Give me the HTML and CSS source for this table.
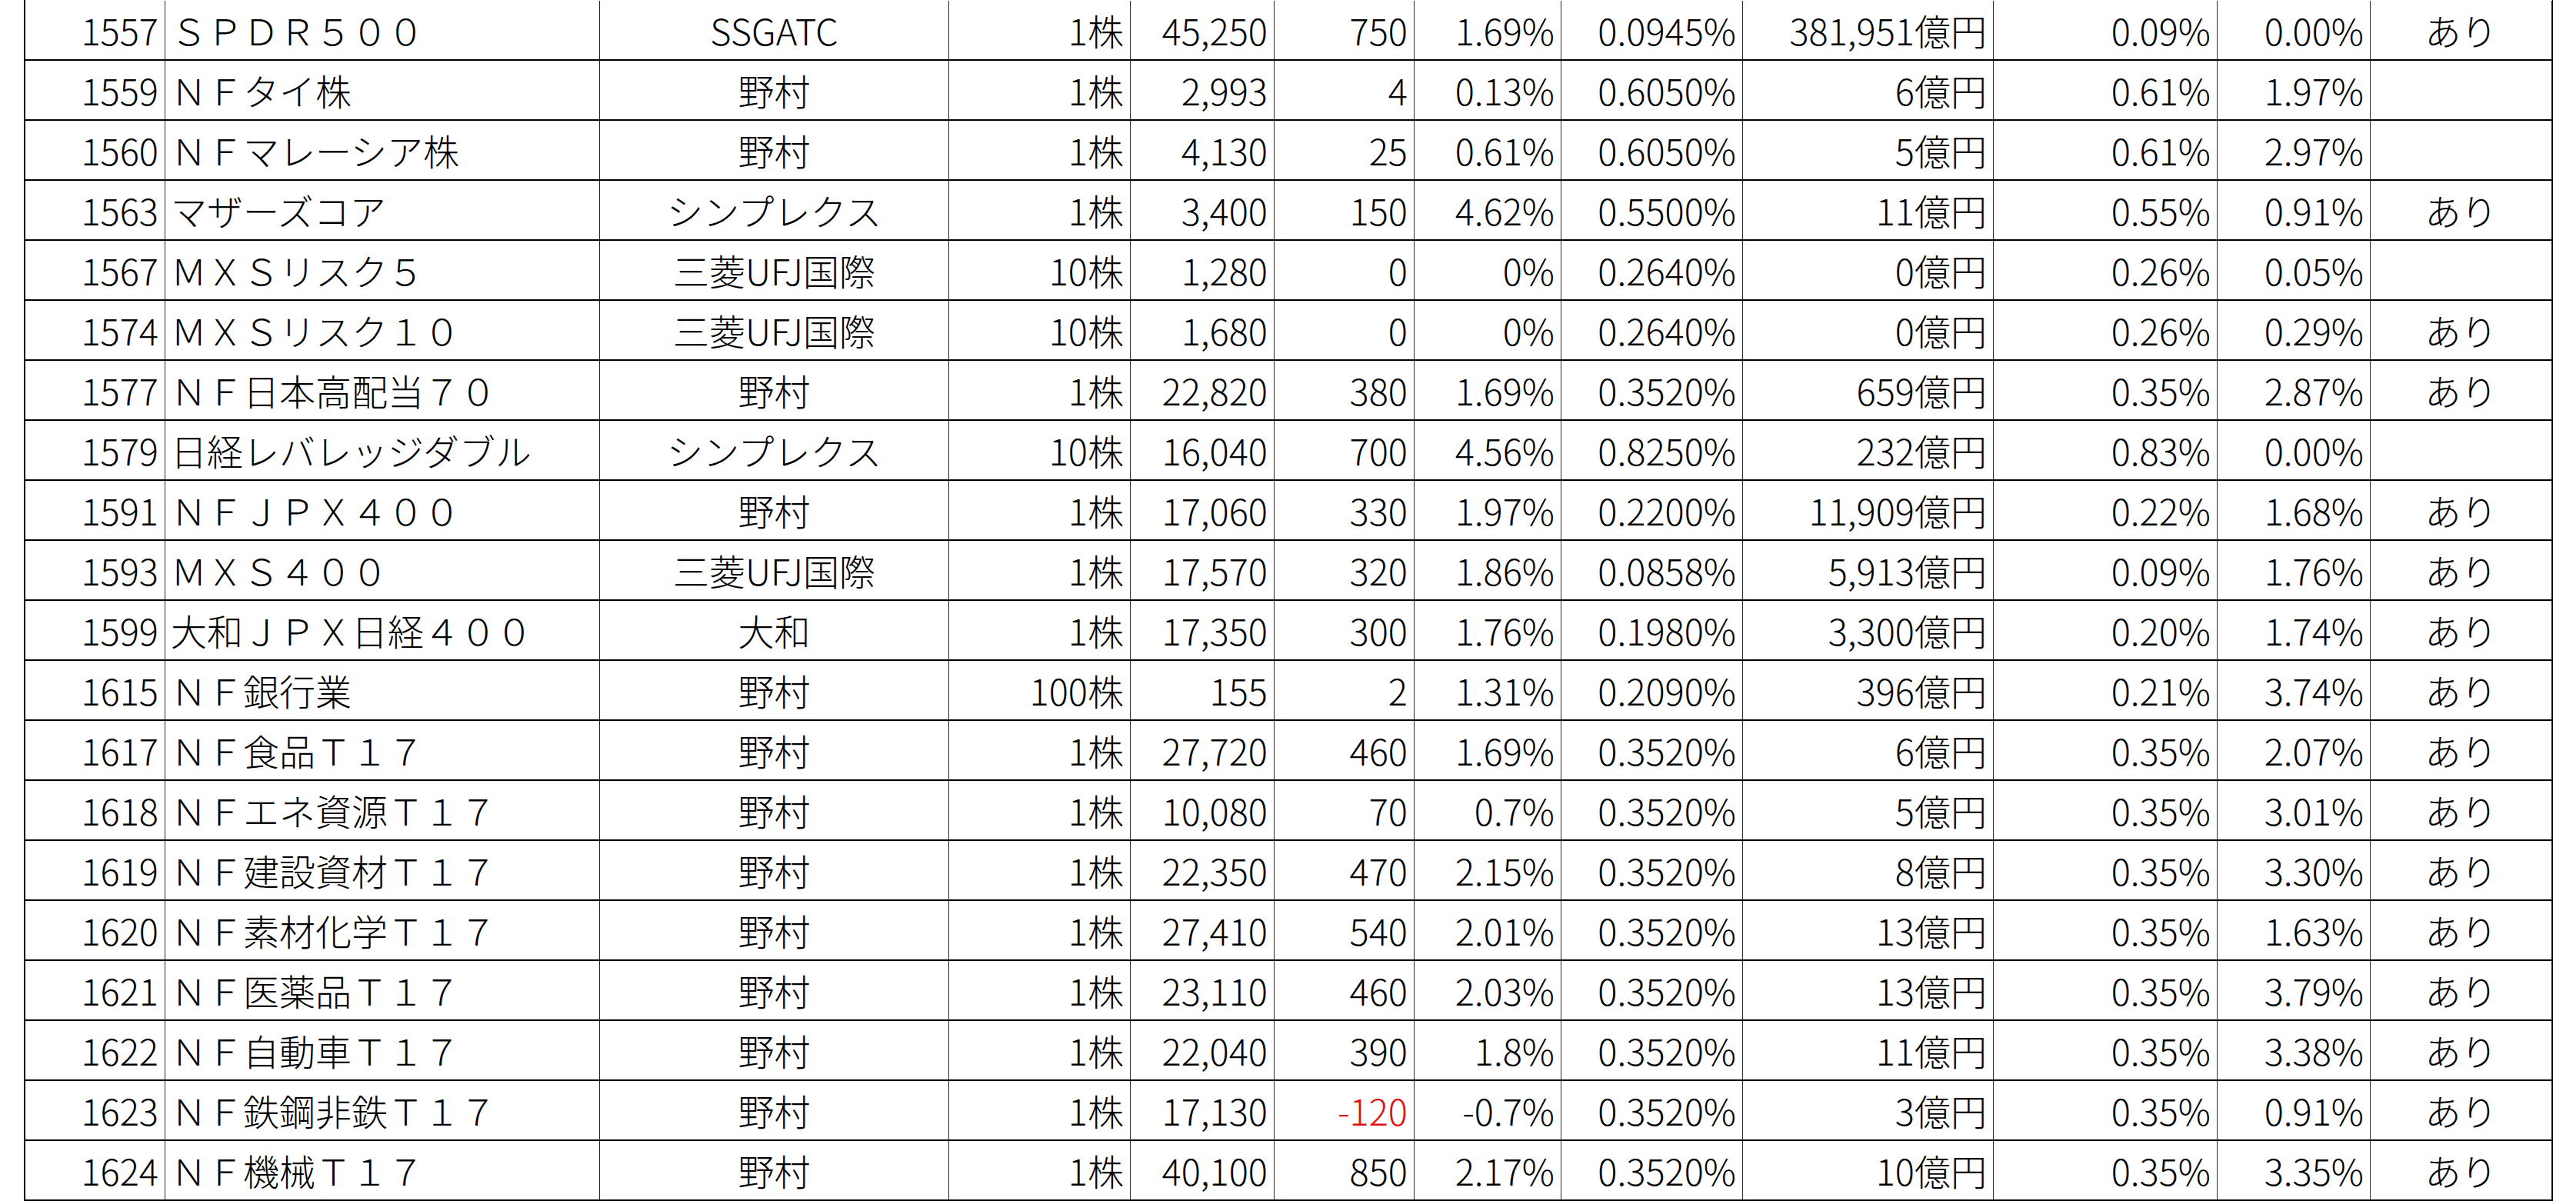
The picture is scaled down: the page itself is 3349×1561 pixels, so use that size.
FILE: index.html
```html
<!DOCTYPE html>
<html lang="ja">
<head>
<meta charset="utf-8">
<title>ETF一覧</title>
<link rel="stylesheet" href="styles.css">
</head>
<body>
<div class="sheet">
  <div class="cell r">1557</div><div class="cell l">ＳＰＤＲ５００</div><div class="cell c">SSGATC</div><div class="cell r">1株</div><div class="cell r">45,250</div><div class="cell r">750</div><div class="cell r">1.69%</div><div class="cell r">0.0945%</div><div class="cell r">381,951億円</div><div class="cell r">0.09%</div><div class="cell r">0.00%</div><div class="cell c">あり</div>
  <div class="cell r">1559</div><div class="cell l">ＮＦタイ株</div><div class="cell c">野村</div><div class="cell r">1株</div><div class="cell r">2,993</div><div class="cell r">4</div><div class="cell r">0.13%</div><div class="cell r">0.6050%</div><div class="cell r">6億円</div><div class="cell r">0.61%</div><div class="cell r">1.97%</div><div class="cell c"></div>
  <div class="cell r">1560</div><div class="cell l">ＮＦマレーシア株</div><div class="cell c">野村</div><div class="cell r">1株</div><div class="cell r">4,130</div><div class="cell r">25</div><div class="cell r">0.61%</div><div class="cell r">0.6050%</div><div class="cell r">5億円</div><div class="cell r">0.61%</div><div class="cell r">2.97%</div><div class="cell c"></div>
  <div class="cell r">1563</div><div class="cell l">マザーズコア</div><div class="cell c">シンプレクス</div><div class="cell r">1株</div><div class="cell r">3,400</div><div class="cell r">150</div><div class="cell r">4.62%</div><div class="cell r">0.5500%</div><div class="cell r">11億円</div><div class="cell r">0.55%</div><div class="cell r">0.91%</div><div class="cell c">あり</div>
  <div class="cell r">1567</div><div class="cell l">ＭＸＳリスク５</div><div class="cell c">三菱UFJ国際</div><div class="cell r">10株</div><div class="cell r">1,280</div><div class="cell r">0</div><div class="cell r">0%</div><div class="cell r">0.2640%</div><div class="cell r">0億円</div><div class="cell r">0.26%</div><div class="cell r">0.05%</div><div class="cell c"></div>
  <div class="cell r">1574</div><div class="cell l">ＭＸＳリスク１０</div><div class="cell c">三菱UFJ国際</div><div class="cell r">10株</div><div class="cell r">1,680</div><div class="cell r">0</div><div class="cell r">0%</div><div class="cell r">0.2640%</div><div class="cell r">0億円</div><div class="cell r">0.26%</div><div class="cell r">0.29%</div><div class="cell c">あり</div>
  <div class="cell r">1577</div><div class="cell l">ＮＦ日本高配当７０</div><div class="cell c">野村</div><div class="cell r">1株</div><div class="cell r">22,820</div><div class="cell r">380</div><div class="cell r">1.69%</div><div class="cell r">0.3520%</div><div class="cell r">659億円</div><div class="cell r">0.35%</div><div class="cell r">2.87%</div><div class="cell c">あり</div>
  <div class="cell r">1579</div><div class="cell l">日経レバレッジダブル</div><div class="cell c">シンプレクス</div><div class="cell r">10株</div><div class="cell r">16,040</div><div class="cell r">700</div><div class="cell r">4.56%</div><div class="cell r">0.8250%</div><div class="cell r">232億円</div><div class="cell r">0.83%</div><div class="cell r">0.00%</div><div class="cell c"></div>
  <div class="cell r">1591</div><div class="cell l">ＮＦＪＰＸ４００</div><div class="cell c">野村</div><div class="cell r">1株</div><div class="cell r">17,060</div><div class="cell r">330</div><div class="cell r">1.97%</div><div class="cell r">0.2200%</div><div class="cell r">11,909億円</div><div class="cell r">0.22%</div><div class="cell r">1.68%</div><div class="cell c">あり</div>
  <div class="cell r">1593</div><div class="cell l">ＭＸＳ４００</div><div class="cell c">三菱UFJ国際</div><div class="cell r">1株</div><div class="cell r">17,570</div><div class="cell r">320</div><div class="cell r">1.86%</div><div class="cell r">0.0858%</div><div class="cell r">5,913億円</div><div class="cell r">0.09%</div><div class="cell r">1.76%</div><div class="cell c">あり</div>
  <div class="cell r">1599</div><div class="cell l">大和ＪＰＸ日経４００</div><div class="cell c">大和</div><div class="cell r">1株</div><div class="cell r">17,350</div><div class="cell r">300</div><div class="cell r">1.76%</div><div class="cell r">0.1980%</div><div class="cell r">3,300億円</div><div class="cell r">0.20%</div><div class="cell r">1.74%</div><div class="cell c">あり</div>
  <div class="cell r">1615</div><div class="cell l">ＮＦ銀行業</div><div class="cell c">野村</div><div class="cell r">100株</div><div class="cell r">155</div><div class="cell r">2</div><div class="cell r">1.31%</div><div class="cell r">0.2090%</div><div class="cell r">396億円</div><div class="cell r">0.21%</div><div class="cell r">3.74%</div><div class="cell c">あり</div>
  <div class="cell r">1617</div><div class="cell l">ＮＦ食品Ｔ１７</div><div class="cell c">野村</div><div class="cell r">1株</div><div class="cell r">27,720</div><div class="cell r">460</div><div class="cell r">1.69%</div><div class="cell r">0.3520%</div><div class="cell r">6億円</div><div class="cell r">0.35%</div><div class="cell r">2.07%</div><div class="cell c">あり</div>
  <div class="cell r">1618</div><div class="cell l">ＮＦエネ資源Ｔ１７</div><div class="cell c">野村</div><div class="cell r">1株</div><div class="cell r">10,080</div><div class="cell r">70</div><div class="cell r">0.7%</div><div class="cell r">0.3520%</div><div class="cell r">5億円</div><div class="cell r">0.35%</div><div class="cell r">3.01%</div><div class="cell c">あり</div>
  <div class="cell r">1619</div><div class="cell l">ＮＦ建設資材Ｔ１７</div><div class="cell c">野村</div><div class="cell r">1株</div><div class="cell r">22,350</div><div class="cell r">470</div><div class="cell r">2.15%</div><div class="cell r">0.3520%</div><div class="cell r">8億円</div><div class="cell r">0.35%</div><div class="cell r">3.30%</div><div class="cell c">あり</div>
  <div class="cell r">1620</div><div class="cell l">ＮＦ素材化学Ｔ１７</div><div class="cell c">野村</div><div class="cell r">1株</div><div class="cell r">27,410</div><div class="cell r">540</div><div class="cell r">2.01%</div><div class="cell r">0.3520%</div><div class="cell r">13億円</div><div class="cell r">0.35%</div><div class="cell r">1.63%</div><div class="cell c">あり</div>
  <div class="cell r">1621</div><div class="cell l">ＮＦ医薬品Ｔ１７</div><div class="cell c">野村</div><div class="cell r">1株</div><div class="cell r">23,110</div><div class="cell r">460</div><div class="cell r">2.03%</div><div class="cell r">0.3520%</div><div class="cell r">13億円</div><div class="cell r">0.35%</div><div class="cell r">3.79%</div><div class="cell c">あり</div>
  <div class="cell r">1622</div><div class="cell l">ＮＦ自動車Ｔ１７</div><div class="cell c">野村</div><div class="cell r">1株</div><div class="cell r">22,040</div><div class="cell r">390</div><div class="cell r">1.8%</div><div class="cell r">0.3520%</div><div class="cell r">11億円</div><div class="cell r">0.35%</div><div class="cell r">3.38%</div><div class="cell c">あり</div>
  <div class="cell r">1623</div><div class="cell l">ＮＦ鉄鋼非鉄Ｔ１７</div><div class="cell c">野村</div><div class="cell r">1株</div><div class="cell r">17,130</div><div class="cell r neg">-120</div><div class="cell r">-0.7%</div><div class="cell r">0.3520%</div><div class="cell r">3億円</div><div class="cell r">0.35%</div><div class="cell r">0.91%</div><div class="cell c">あり</div>
  <div class="cell r">1624</div><div class="cell l">ＮＦ機械Ｔ１７</div><div class="cell c">野村</div><div class="cell r">1株</div><div class="cell r">40,100</div><div class="cell r">850</div><div class="cell r">2.17%</div><div class="cell r">0.3520%</div><div class="cell r">10億円</div><div class="cell r">0.35%</div><div class="cell r">3.35%</div><div class="cell c">あり</div>
</div>
</body>
</html>
```

FILE: styles.css
```css
html, body {
  margin: 0;
  padding: 0;
  background: #ffffff;
}

body {
  font-family: "Noto Sans CJK JP", "Noto Sans", sans-serif;
  font-size: 47px;
  font-weight: 300;
  color: #000000;
  overflow: hidden;
}

.sheet {
  display: grid;
  grid-template-columns: 182px 565px 454px 236px 187px 182px 191px 236px 326px 291px 199px 236px;
  grid-auto-rows: 78px;
  width: 3285px;
  margin-left: 31px;
  padding-top: 1px;
  border-left: 2px solid #000000;
  border-right: 1px solid #000000;
}

.cell {
  box-sizing: border-box;
  display: flex;
  align-items: center;
  border-right: 1px solid #2a2a2a;
  border-bottom: 2px solid #000000;
  padding: 0 8px 2px 7px;
  white-space: nowrap;
  overflow: hidden;
  line-height: 1;
}

.r { justify-content: flex-end; }
.l { justify-content: flex-start; }
.c { justify-content: center; padding-left: 0; padding-right: 0; }

.neg { color: #e01010; }
```
